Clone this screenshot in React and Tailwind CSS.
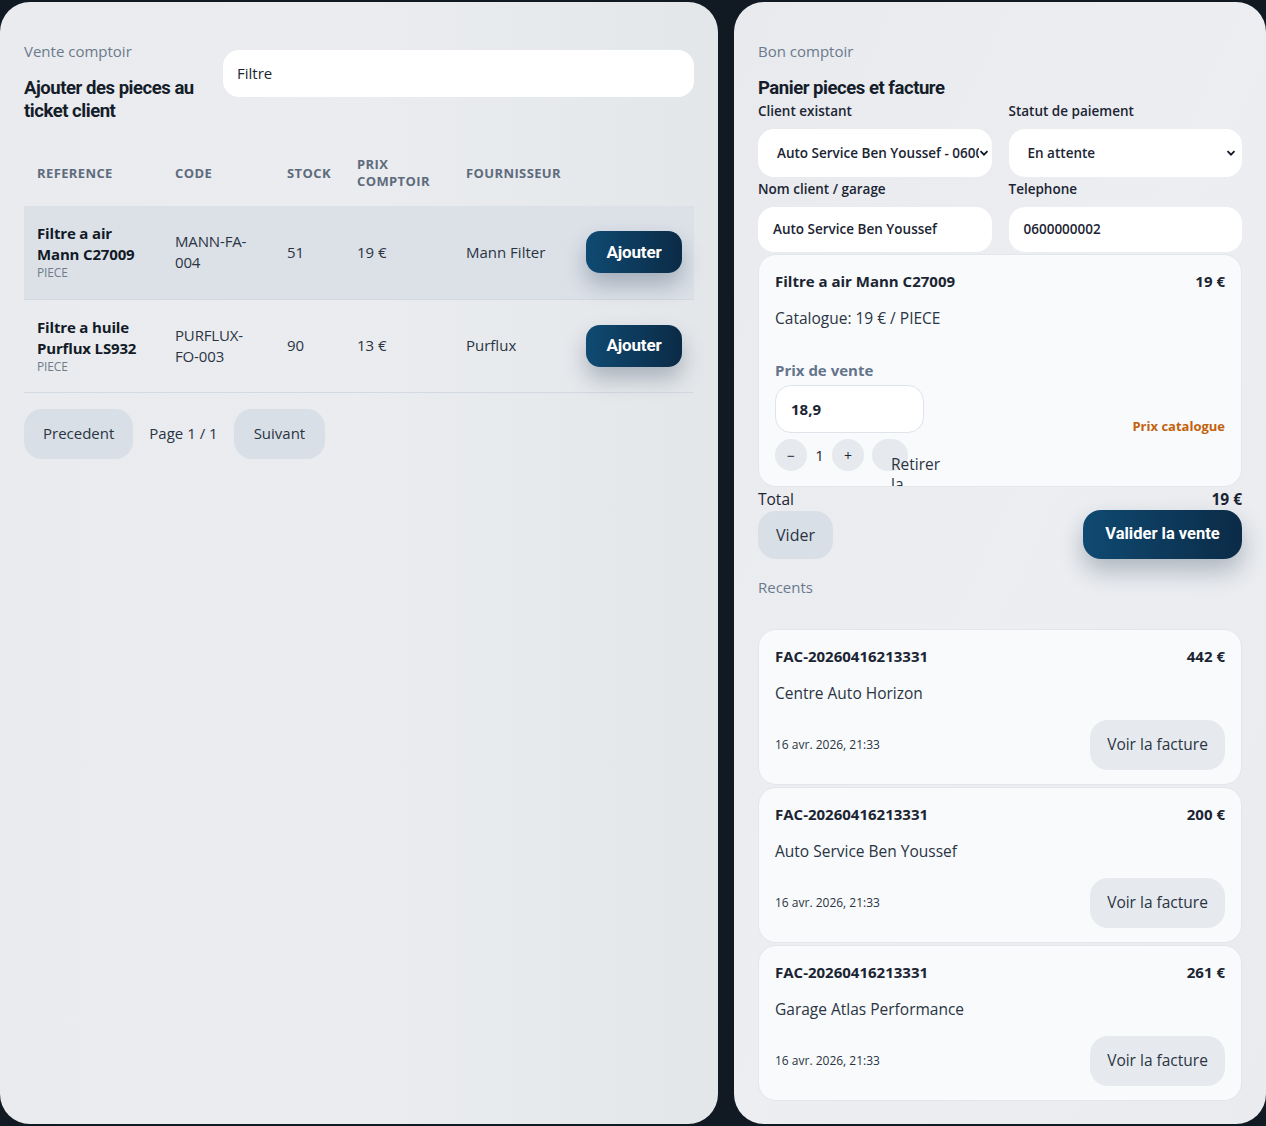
import React from "react";

const produits = [
    { nom: ["Filtre a air", "Mann C27009"], code: ["MANN-FA-", "004"], stock: 51, prix: "19 €", fournisseur: "Mann Filter", actif: true },
    { nom: ["Filtre a huile", "Purflux LS932"], code: ["PURFLUX-", "FO-003"], stock: 90, prix: "13 €", fournisseur: "Purflux", actif: false },
];

const recents = [
    { numero: "FAC-20260416213331", montant: "442 €", client: "Centre Auto Horizon" },
    { numero: "FAC-20260416213331", montant: "200 €", client: "Auto Service Ben Youssef" },
    { numero: "FAC-20260416213331", montant: "261 €", client: "Garage Atlas Performance" },
];

const titre = { fontFamily: "Roboto, 'Liberation Sans', sans-serif" };

const Chevron = () => (
    <svg width="10" height="10" viewBox="0 0 10 10" className="shrink-0">
        <path d="M1.5 3.2 5 6.7 8.5 3.2" fill="none" stroke="#111827" strokeWidth="1.8" />
    </svg>
);

const VenteComptoir = () => {
    return (
        <div className="min-h-[1126px] bg-[#111923] flex gap-4 pt-[2px]" style={{ fontFamily: "'Open Sans', 'Noto Sans', sans-serif" }}>
            {/* catalogue */}
            <section className="w-[718px] h-[1122px] rounded-[30px] bg-gradient-to-r from-[#e9ebee] via-[#eaecef] to-[#e4e7ea] px-6 pt-[37px] text-[#1b2433]">
                <div className="flex gap-4">
                    <div className="w-[183px] shrink-0">
                        <p className="text-[15px] leading-6 text-[#6b7a8c]">Vente comptoir</p>
                        <h1 className="mt-[14px] text-[18.5px] leading-[23px] font-bold tracking-[-0.025em] text-[#151d2a]" style={titre}>
                            Ajouter des pieces au ticket client
                        </h1>
                    </div>
                    <div className="flex-1 pt-[11px]">
                        <div className="h-[47px] rounded-2xl bg-white flex items-center px-[14px] text-[15px] text-[#1b2433]">Filtre</div>
                    </div>
                </div>

                <table className="mt-[17px] w-full table-fixed border-collapse">
                    <colgroup>
                        <col className="w-[138px]" />
                        <col className="w-[112px]" />
                        <col className="w-[70px]" />
                        <col className="w-[109px]" />
                        <col className="w-[120px]" />
                        <col />
                    </colgroup>
                    <thead>
                        <tr className="h-[66px] text-left text-[13px] leading-[17px] font-bold tracking-[0.03em] text-[#5e6b7d]">
                            <th className="px-[13px] font-bold">REFERENCE</th>
                            <th className="px-[13px] font-bold">CODE</th>
                            <th className="px-[13px] font-bold">STOCK</th>
                            <th className="px-[13px] font-bold">PRIX<br />COMPTOIR</th>
                            <th className="px-[13px] font-bold">FOURNISSEUR</th>
                            <th></th>
                        </tr>
                    </thead>
                    <tbody>
                        {produits.map((p) => (
                            <tr key={p.code[0]} className={`h-[93px] border-b border-[#d3d9e0] ${p.actif ? "bg-[#dce1e8]" : ""}`}>
                                <td className="px-[13px] tracking-[-0.01em]">
                                    <p className="text-[15px] leading-[21px] font-bold text-[#121a27]">{p.nom[0]}<br />{p.nom[1]}</p>
                                    <p className="text-[12px] leading-4 text-[#6f7c8c]">PIECE</p>
                                </td>
                                <td className="px-[13px] text-[15px] leading-[21px] tracking-[-0.01em] text-[#2a3443]">{p.code[0]}<br />{p.code[1]}</td>
                                <td className="px-[13px] text-[15px] text-[#2a3443]">{p.stock}</td>
                                <td className="px-[13px] text-[15px] text-[#2a3443]">{p.prix}</td>
                                <td className="px-[13px] text-[15px] text-[#2a3443]">{p.fournisseur}</td>
                                <td className="pr-3 text-right">
                                    <button className="w-24 h-[42px] rounded-[14px] bg-gradient-to-r from-[#0f4a72] to-[#0b2b47] text-white text-[17px] font-bold tracking-[-0.01em] shadow-[0_12px_22px_rgba(15,40,70,0.28)]" style={titre}>
                                        Ajouter
                                    </button>
                                </td>
                            </tr>
                        ))}
                    </tbody>
                </table>

                <div className="mt-[16px] flex items-center gap-4 text-[15px] text-[#2a3443]">
                    <button className="h-[50px] px-[19px] rounded-[18px] bg-[#d9dfe6]">Precedent</button>
                    <span>Page 1 / 1</span>
                    <button className="h-[50px] px-[20px] rounded-[18px] bg-[#d9dfe6]">Suivant</button>
                </div>
            </section>

            {/* panier */}
            <section className="flex-1 h-[1122px] rounded-[30px] bg-gradient-to-br from-[#e8eaee] via-[#eceef1] to-[#e9ebee] px-6 pt-[37px] text-[#1b2433]">
                <p className="text-[15px] leading-6 text-[#6b7a8c]">Bon comptoir</p>
                <h2 className="mt-[14px] text-[18.5px] leading-[23px] font-bold tracking-[-0.025em] text-[#151d2a]" style={titre}>
                    Panier pieces et facture
                </h2>

                <div className="mt-[1px] grid grid-cols-2 gap-x-[17px] gap-y-[2px]">
                    <label className="flex flex-col gap-2">
                        <span className="text-[13.5px] leading-5 font-semibold">Client existant</span>
                        <div className="h-12 rounded-2xl bg-white flex items-center pl-[19px] pr-[3px] text-[13.5px] font-semibold">
                            <span className="flex-1 overflow-hidden whitespace-nowrap">Auto Service Ben Youssef - 0600000002</span>
                            <Chevron />
                        </div>
                    </label>
                    <label className="flex flex-col gap-2">
                        <span className="text-[13.5px] leading-5 font-semibold">Statut de paiement</span>
                        <div className="h-12 rounded-2xl bg-white flex items-center pl-[19px] pr-[6px] text-[13.5px] font-semibold">
                            <span className="flex-1">En attente</span>
                            <Chevron />
                        </div>
                    </label>
                    <label className="flex flex-col gap-2">
                        <span className="text-[13.5px] leading-5 font-semibold">Nom client / garage</span>
                        <div className="h-[45px] rounded-2xl bg-white flex items-center px-[15px] text-[13.5px] font-semibold">Auto Service Ben Youssef</div>
                    </label>
                    <label className="flex flex-col gap-2">
                        <span className="text-[13.5px] leading-5 font-semibold">Telephone</span>
                        <div className="h-[45px] rounded-2xl bg-white flex items-center px-[15px] text-[13.5px] font-semibold">0600000002</div>
                    </label>
                </div>

                {/* ligne du panier */}
                <div className="mt-[2px] h-[233px] overflow-hidden rounded-[18px] border border-[#e3e7eb] bg-[#f8fafb] px-4 pt-4">
                    <div className="flex justify-between text-[15px] leading-5 font-bold">
                        <span>Filtre a air Mann C27009</span>
                        <span>19 €</span>
                    </div>
                    <p className="mt-[17px] text-[15.5px] leading-5 text-[#2a3443]">Catalogue: 19 € / PIECE</p>
                    <div className="mt-[32px] flex justify-between items-end">
                        <div>
                            <p className="text-[15px] leading-5 font-bold text-[#64748b]">Prix de vente</p>
                            <div className="mt-[5px] w-[149px] h-12 rounded-2xl border border-[#dfe4ea] bg-white flex items-center px-[15px] text-[15px] font-bold">18,9</div>
                        </div>
                        <span className="mb-[-3px] text-[13px] leading-5 font-bold text-[#c2620e]">Prix catalogue</span>
                    </div>
                    <div className="mt-[6px] flex items-center text-[15px]">
                        <button className="w-8 h-8 rounded-full bg-[#e6eaee] text-[14px]">−</button>
                        <span className="w-[25px] text-center">1</span>
                        <button className="w-8 h-8 rounded-full bg-[#e6eaee] text-[14px]">+</button>
                        <button className="relative ml-2 w-9 h-8 rounded-full bg-[#e6eaee]">
                            <span className="absolute left-[19px] top-[15px] w-[48px] text-left text-[15.5px] leading-5 text-[#2a3443]">Retirer la ligne</span>
                        </button>
                    </div>
                </div>

                <div className="mt-[2px] flex justify-between text-[15.5px] leading-5">
                    <span>Total</span>
                    <span className="font-bold">19 €</span>
                </div>
                <div className="mt-[1px] flex justify-between items-center">
                    <button className="h-12 w-[75px] rounded-[18px] bg-[#d9dfe6] text-[16px] text-[#2a3443]">Vider</button>
                    <button className="h-[49px] w-[159px] rounded-[18px] bg-gradient-to-r from-[#0f4a72] to-[#0b2b47] text-white text-[16.5px] font-bold shadow-[0_12px_24px_rgba(15,40,70,0.28)]" style={titre}>
                        Valider la vente
                    </button>
                </div>

                <p className="mt-[16px] text-[15px] leading-6 text-[#6b7a8c]">Recents</p>

                <div className="mt-[30px] flex flex-col gap-[2px]">
                    {recents.map((r) => (
                        <div key={r.montant} className="h-[156px] rounded-[18px] border border-[#e3e7eb] bg-[#f8fafb] px-4 pt-4">
                            <div className="flex justify-between text-[15px] leading-5 font-bold">
                                <span>{r.numero}</span>
                                <span>{r.montant}</span>
                            </div>
                            <p className="mt-[17px] text-[15.5px] leading-5 text-[#2a3443]">{r.client}</p>
                            <div className="mt-[17px] flex justify-between items-center">
                                <span className="text-[12px] text-[#2a3443]">16 avr. 2026, 21:33</span>
                                <button className="h-[50px] w-[135px] rounded-[18px] bg-[#e6eaee] text-[15.5px] text-[#2a3443]">Voir la facture</button>
                            </div>
                        </div>
                    ))}
                </div>
            </section>
        </div>
    );
};

export default VenteComptoir;
